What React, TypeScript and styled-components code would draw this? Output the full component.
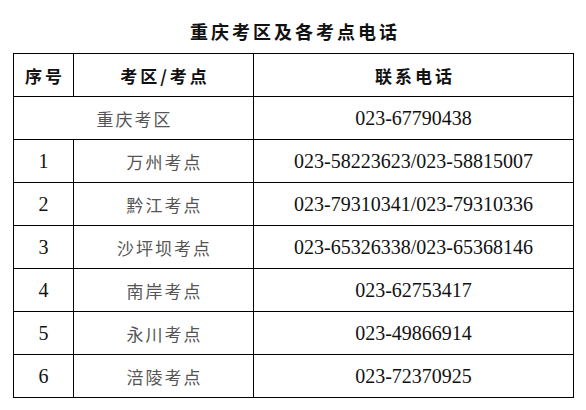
import React from "react";
import styled, { createGlobalStyle } from "styled-components";

const GlobalStyle = createGlobalStyle`
  html, body {
    margin: 0;
    padding: 0;
    background: #fff;
  }
  body {
    font-family: "Liberation Serif", "Noto Sans CJK SC", serif;
    color: #000;
  }
`;

interface Row {
  no?: string;
  site: string;
  phone: string;
}

const rows: Row[] = [
  { site: "重庆考区", phone: "023-67790438" },
  { no: "1", site: "万州考点", phone: "023-58223623/023-58815007" },
  { no: "2", site: "黔江考点", phone: "023-79310341/023-79310336" },
  { no: "3", site: "沙坪坝考点", phone: "023-65326338/023-65368146" },
  { no: "4", site: "南岸考点", phone: "023-62753417" },
  { no: "5", site: "永川考点", phone: "023-49866914" },
  { no: "6", site: "涪陵考点", phone: "023-72370925" },
];

export default function App() {
  return (
    <>
      <GlobalStyle />
      <Page>
        <Title>重庆考区及各考点电话</Title>
        <Table>
          <colgroup>
            <col style={{ width: 60 }} />
            <col style={{ width: 180 }} />
            <col style={{ width: 320 }} />
          </colgroup>
          <thead>
            <tr>
              <HeadCell>序号</HeadCell>
              <HeadCell>考区/考点</HeadCell>
              <HeadCell>联系电话</HeadCell>
            </tr>
          </thead>
          <tbody>
            {rows.map((r) => (
              <tr key={r.site}>
                {r.no === undefined ? (
                  <NameCell colSpan={2}>{r.site}</NameCell>
                ) : (
                  <>
                    <NumCell>{r.no}</NumCell>
                    <NameCell>{r.site}</NameCell>
                  </>
                )}
                <NumCell>{r.phone}</NumCell>
              </tr>
            ))}
          </tbody>
        </Table>
      </Page>
    </>
  );
}

const Page = styled.div`
  width: 586px;
  height: 410px;
  padding: 13px 0 0 13px;
  box-sizing: border-box;
`;

const Title = styled.div`
  width: 561px;
  height: 40px;
  text-align: center;
  font-family: "Noto Sans CJK SC", sans-serif;
  font-weight: 700;
  font-size: 18px;
  line-height: 36px;
  letter-spacing: 3px;
  text-indent: 3px;
  color: #111;
`;

const Table = styled.table`
  width: 561px;
  border-collapse: collapse;
  table-layout: fixed;
`;

const Cell = styled.td`
  border: 1px solid #000;
  height: 42px;
  padding: 0;
  text-align: center;
  vertical-align: middle;
`;

const HeadCell = styled(Cell).attrs({ as: "th" })`
  font-family: "Noto Sans CJK SC", sans-serif;
  font-weight: 700;
  font-size: 17px;
  letter-spacing: 3px;
  text-indent: 3px;
  color: #111;
`;

const NameCell = styled(Cell)`
  font-family: "Noto Sans CJK SC", sans-serif;
  font-size: 17px;
  letter-spacing: 2px;
  text-indent: 2px;
  color: #555;
`;

const NumCell = styled(Cell)`
  font-family: "Liberation Serif", serif;
  font-size: 20px;
  color: #111;
`;
